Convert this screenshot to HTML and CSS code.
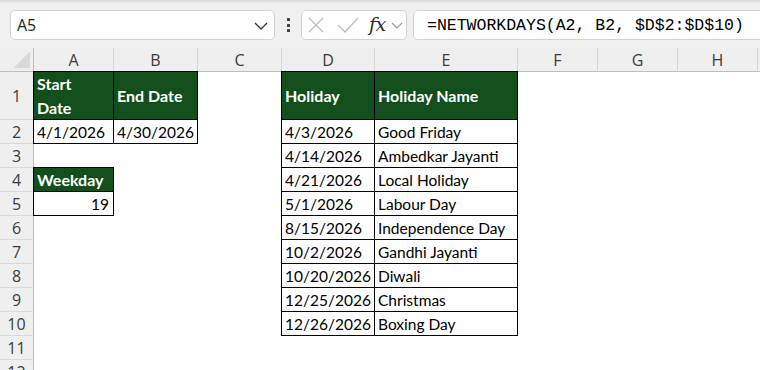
FILE: index.html
```html
<!DOCTYPE html>
<html>
<head>
<meta charset="utf-8">
<link rel="stylesheet" href="styles.css">
</head>
<body>
<div class="app">
  <div class="toolbar">
    <div class="namebox">
      <span class="ref">A5</span>
      <svg class="chev" width="14" height="8" viewBox="0 0 14 8"><polyline points="1,1 7,7 13,1" fill="none" stroke="#333" stroke-width="1.3"/></svg>
    </div>
    <div class="dots"><i></i><i></i><i></i></div>
    <div class="iconbox">
      <svg class="ico-x" width="16" height="16" viewBox="0 0 16 16"><path d="M1 1 L15 15 M15 1 L1 15" stroke="#bdbdbd" stroke-width="1.3" fill="none"/></svg>
      <svg class="ico-ok" width="22" height="16" viewBox="0 0 22 16"><polyline points="1,8 8,15 21,1" stroke="#bdbdbd" stroke-width="1.3" fill="none"/></svg>
      <span class="fx">fx</span>
      <svg class="chev-s" width="12" height="7" viewBox="0 0 12 7"><polyline points="1,1 6,6 11,1" fill="none" stroke="#9a9a9a" stroke-width="1.1"/></svg>
    </div>
    <div class="formula">=NETWORKDAYS(A2, B2, $D$2:$D$10)</div>
  </div>

  <div class="sheet">
    <!-- header -->
    <div class="corner"></div>
    <div class="ch">A</div><div class="ch">B</div><div class="ch">C</div><div class="ch">D</div><div class="ch">E</div><div class="ch">F</div><div class="ch">G</div><div class="ch">H</div><div class="ch"></div>

    <!-- row 1 -->
    <div class="rh">1</div>
    <div class="c b h two">Start<br>Date</div>
    <div class="c b h">End Date</div>
    <div class="c"></div>
    <div class="c b h">Holiday</div>
    <div class="c b h">Holiday Name</div>
    <div class="c"></div><div class="c"></div><div class="c"></div><div class="c"></div>

    <!-- row 2 -->
    <div class="rh">2</div>
    <div class="c b">4/1/2026</div>
    <div class="c b">4/30/2026</div>
    <div class="c"></div>
    <div class="c b">4/3/2026</div>
    <div class="c b">Good Friday</div>
    <div class="c"></div><div class="c"></div><div class="c"></div><div class="c"></div>

    <!-- row 3 -->
    <div class="rh">3</div>
    <div class="c"></div><div class="c"></div><div class="c"></div>
    <div class="c b">4/14/2026</div>
    <div class="c b">Ambedkar Jayanti</div>
    <div class="c"></div><div class="c"></div><div class="c"></div><div class="c"></div>

    <!-- row 4 -->
    <div class="rh">4</div>
    <div class="c b h">Weekday</div>
    <div class="c"></div><div class="c"></div>
    <div class="c b">4/21/2026</div>
    <div class="c b">Local Holiday</div>
    <div class="c"></div><div class="c"></div><div class="c"></div><div class="c"></div>

    <!-- row 5 -->
    <div class="rh">5</div>
    <div class="c b r">19</div>
    <div class="c"></div><div class="c"></div>
    <div class="c b">5/1/2026</div>
    <div class="c b">Labour Day</div>
    <div class="c"></div><div class="c"></div><div class="c"></div><div class="c"></div>

    <!-- row 6 -->
    <div class="rh">6</div>
    <div class="c"></div><div class="c"></div><div class="c"></div>
    <div class="c b">8/15/2026</div>
    <div class="c b">Independence Day</div>
    <div class="c"></div><div class="c"></div><div class="c"></div><div class="c"></div>

    <!-- row 7 -->
    <div class="rh">7</div>
    <div class="c"></div><div class="c"></div><div class="c"></div>
    <div class="c b">10/2/2026</div>
    <div class="c b">Gandhi Jayanti</div>
    <div class="c"></div><div class="c"></div><div class="c"></div><div class="c"></div>

    <!-- row 8 -->
    <div class="rh">8</div>
    <div class="c"></div><div class="c"></div><div class="c"></div>
    <div class="c b">10/20/2026</div>
    <div class="c b">Diwali</div>
    <div class="c"></div><div class="c"></div><div class="c"></div><div class="c"></div>

    <!-- row 9 -->
    <div class="rh">9</div>
    <div class="c"></div><div class="c"></div><div class="c"></div>
    <div class="c b">12/25/2026</div>
    <div class="c b">Christmas</div>
    <div class="c"></div><div class="c"></div><div class="c"></div><div class="c"></div>

    <!-- row 10 -->
    <div class="rh">10</div>
    <div class="c"></div><div class="c"></div><div class="c"></div>
    <div class="c b">12/26/2026</div>
    <div class="c b">Boxing Day</div>
    <div class="c"></div><div class="c"></div><div class="c"></div><div class="c"></div>

    <!-- row 11 -->
    <div class="rh">11</div>
    <div class="c"></div><div class="c"></div><div class="c"></div><div class="c"></div><div class="c"></div><div class="c"></div><div class="c"></div><div class="c"></div><div class="c"></div>

    <!-- row 12 -->
    <div class="rh">12</div>
    <div class="c"></div><div class="c"></div><div class="c"></div><div class="c"></div><div class="c"></div><div class="c"></div><div class="c"></div><div class="c"></div><div class="c"></div>
  </div>
</div>
</body>
</html>
```

FILE: styles.css
```css
* { box-sizing: border-box; }
html, body { margin: 0; padding: 0; background: #fff; }
body { width: 760px; height: 370px; overflow: hidden; }

.app { width: 760px; height: 370px; overflow: hidden; }

/* ---------- formula bar ---------- */
.toolbar {
  height: 48px;
  display: flex;
  align-items: flex-start;
  padding: 10px 0 0 10px;
  background: linear-gradient(to bottom, #d4d4d4 0, #e6e6e6 2px, #f0f0f0 4px, #f0f0f0 100%);
  overflow: hidden;
}
.namebox {
  width: 265px;
  height: 30px;
  background: #fff;
  border: 1px solid #d2d2d2;
  border-radius: 5px;
  display: flex;
  align-items: center;
  justify-content: space-between;
  padding: 0 6px 0 6px;
}
.ref {
  font-family: "Open Sans", sans-serif;
  font-size: 16px;
  color: #1f1f1f;
}
.chev { margin-top: 2px; }
.dots {
  width: 26px;
  height: 30px;
  display: flex;
  flex-direction: column;
  align-items: center;
  justify-content: center;
  gap: 2.5px;
}
.dots i {
  display: block;
  width: 3px;
  height: 3px;
  border-radius: 0.5px;
  background: #3f3f3f;
}
.iconbox {
  width: 106px;
  height: 30px;
  background: #fff;
  border: 1px solid #d2d2d2;
  border-radius: 5px;
  display: flex;
  align-items: center;
  padding-left: 6px;
}
.ico-x { margin-right: 13px; }
.ico-ok { margin-right: 10px; margin-top: -1px; }
.fx {
  font-family: "DejaVu Serif", "Liberation Serif", serif;
  font-style: italic;
  font-size: 19px;
  color: #2b2b2b;
  letter-spacing: -0.5px;
  margin-top: -3px;
}
.chev-s { margin-left: 5px; margin-top: 1px; }
.formula {
  flex: 1;
  margin-left: 6px;
  margin-right: -30px;
  height: 30px;
  background: #fff;
  border: 1px solid #d2d2d2;
  border-radius: 5px;
  padding-left: 13px;
  font-family: "Liberation Mono", monospace;
  font-size: 16.5px;
  line-height: 30px;
  color: #000;
  white-space: nowrap;
}

/* ---------- sheet grid ---------- */
.sheet {
  display: grid;
  grid-template-columns: 34px 80px 84px 84px 93px 143px 80px 80px 80px 80px;
  grid-template-rows: 24px 48px repeat(11, 24px);
  background: #fff;
}
.corner {
  background-color: #efefef;
  background-image: linear-gradient(to bottom right, transparent 50%, #d9d9d9 50%);
  background-size: 16px 16px;
  background-position: 14px 4px;
  background-repeat: no-repeat;
  border-right: 1px solid #bdbdbd;
  border-bottom: 1px solid #bdbdbd;
}
.ch {
  background: #efefef;
  border-right: 1px solid #d6d6d6;
  border-bottom: 1px solid #bdbdbd;
  font-family: "Open Sans", sans-serif;
  font-size: 16px;
  color: #3c3c3c;
  display: flex;
  align-items: center;
  justify-content: center;
  padding-top: 1px;
}
.rh {
  background: #efefef;
  border-right: 1px solid #bdbdbd;
  border-bottom: 1px solid #d9d9d9;
  font-family: "Open Sans", sans-serif;
  font-size: 16px;
  color: #3c3c3c;
  display: flex;
  align-items: center;
  justify-content: center;
  padding-top: 1px;
}

.c {
  font-family: Lato, "Open Sans", sans-serif;
  font-size: 15.5px;
  color: #000;
  display: flex;
  align-items: center;
  padding: 0 3px 0 3px;
  white-space: nowrap;
  overflow: visible;
}
.b {
  border-right: 1px solid #000;
  border-bottom: 1px solid #000;
  box-shadow: -1px 0 0 #000, 0 -1px 0 #000, -1px -1px 0 #000;
}
.h {
  background: #134f1c;
  color: #fff;
  font-weight: 700;
  font-size: 16px;
}
.two {
  line-height: 24px;
  white-space: normal;
}
.r {
  justify-content: flex-end;
  padding-right: 4px;
}
```
